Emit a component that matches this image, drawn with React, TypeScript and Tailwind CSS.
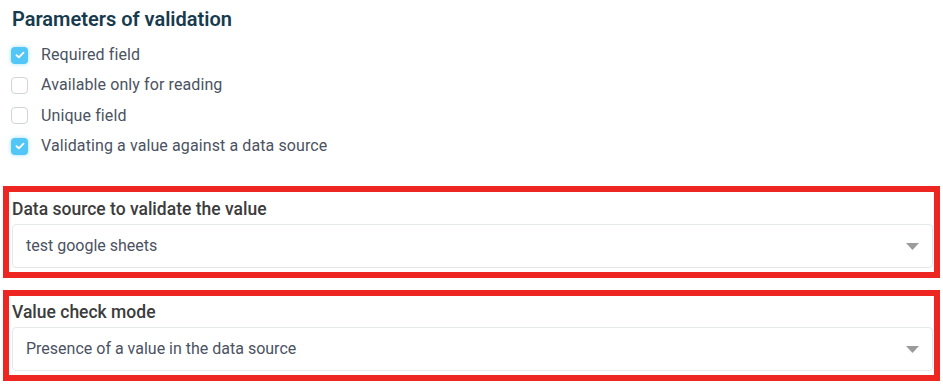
import React from "react";

const font = { fontFamily: "Roboto, 'Noto Sans', sans-serif" };

function Checkbox({ checked }: { checked: boolean }) {
  if (checked) {
    return (
      <span className="flex h-[17px] w-[17px] items-center justify-center rounded-[4px] bg-[#52c6f7] shadow-[0_0_4px_rgba(82,198,247,0.55)]">
        <svg width="10" height="8" viewBox="0 0 10 8" fill="none">
          <path d="M1.5 4.2 L3.9 6.3 L8.5 1.7" stroke="#fff" strokeWidth="1.8" strokeLinecap="round" strokeLinejoin="round" />
        </svg>
      </span>
    );
  }
  return <span className="block h-[17px] w-[17px] rounded-[4px] border border-[#d0d5da] bg-white" />;
}

function Option({ label, checked }: { label: string; checked: boolean }) {
  return (
    <div className="flex h-[30.33px] items-center gap-[13px] pl-[11px]">
      <Checkbox checked={checked} />
      <span className="text-[16px] tracking-[0.1px] text-[#4b5262]">{label}</span>
    </div>
  );
}

function SelectBox({ label, value, tight }: { label: string; value: string; tight?: boolean }) {
  return (
    <div className="border-[6px] border-[#ee2622] pb-1">
      <div className={(tight ? "h-[31px] pt-[3px]" : "h-8 pt-[4px]") + " pl-[3px] text-[17.5px] font-medium text-[#3c3c3c]"}>{label}</div>
      <div className="ml-[3px] mr-px flex h-11 items-center justify-between rounded-[4px] border border-[#e6e8eb] bg-white pl-[13px] pr-[13px]">
        <span className="text-[16px] text-[#4b5262]">{value}</span>
        <svg width="13" height="7" viewBox="0 0 13 7">
          <path d="M0 0 L13 0 L6.5 7 Z" fill="#9b9b9b" />
        </svg>
      </div>
    </div>
  );
}

export default function App() {
  return (
    <div className="h-[387px] w-[943px] bg-white" style={font}>
      <h2 className="pl-3 pt-[6px] text-[20px] font-semibold leading-[26px] text-[#173b4e]">Parameters of validation</h2>
      <div className="mt-[8px]">
        <Option label="Required field" checked />
        <Option label="Available only for reading" checked={false} />
        <Option label="Unique field" checked={false} />
        <Option label="Validating a value against a data source" checked />
      </div>
      <div className="mt-[25px] ml-[3px] mr-[3px] flex flex-col gap-3">
        <SelectBox label="Data source to validate the value" value="test google sheets" />
        <SelectBox label="Value check mode" value="Presence of a value in the data source" tight />
      </div>
    </div>
  );
}
